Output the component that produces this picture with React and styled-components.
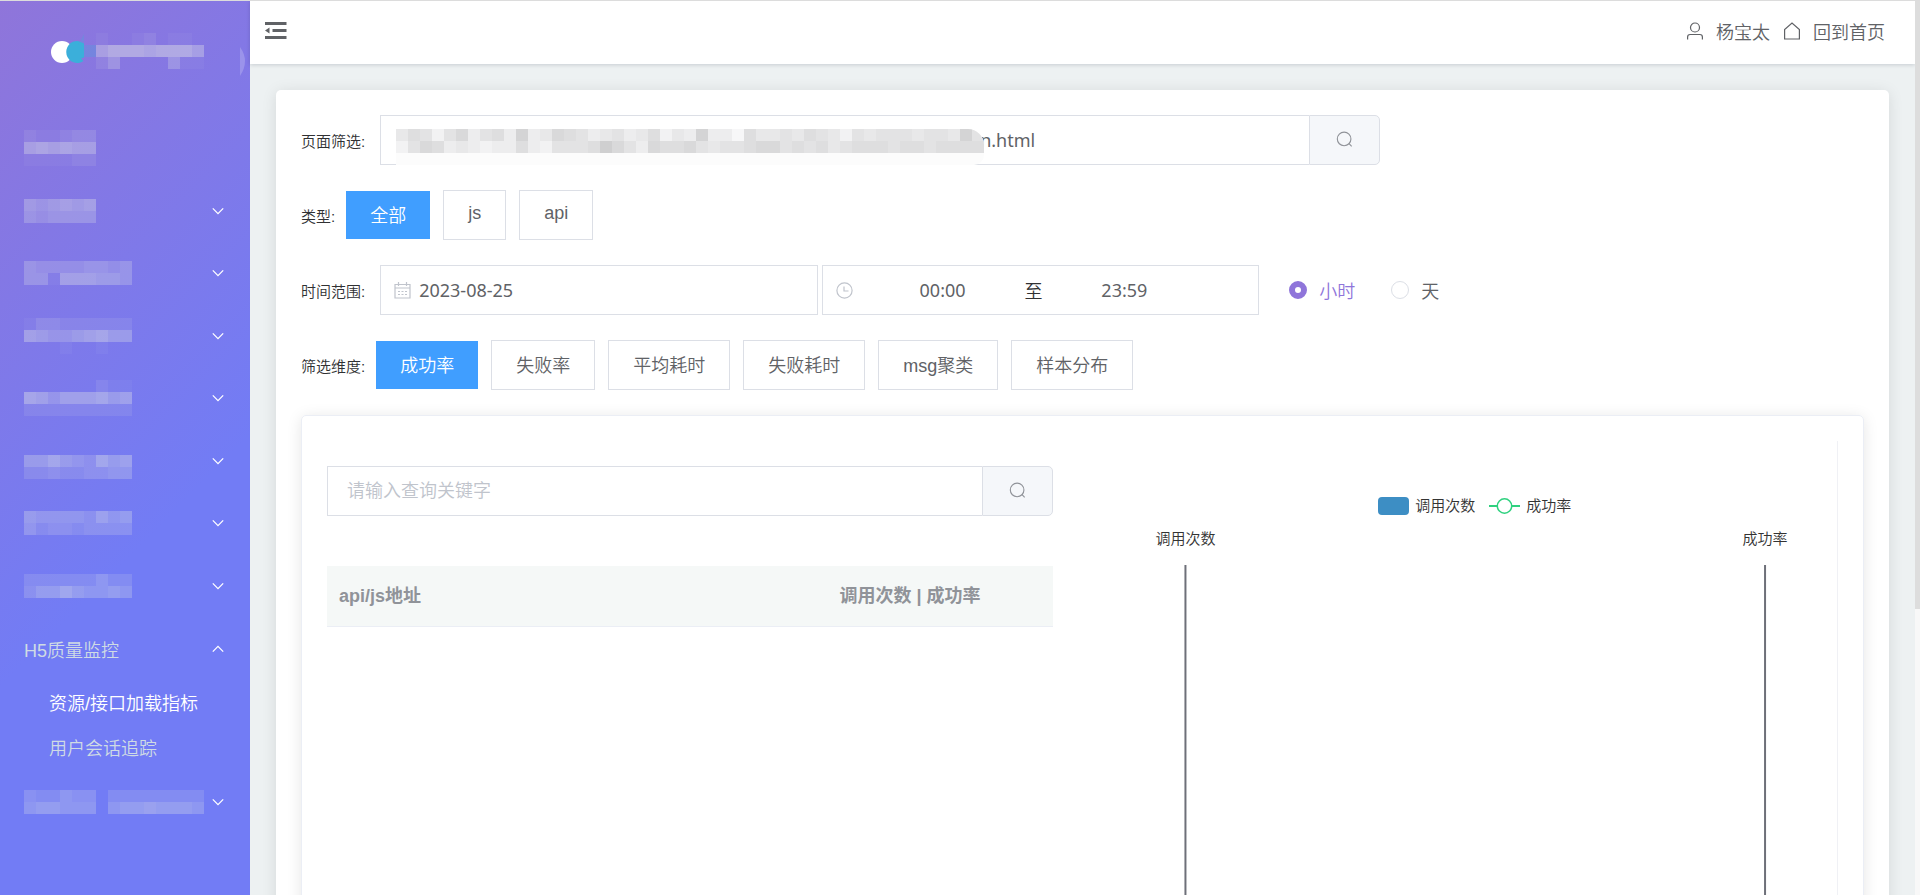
import React, { useState } from 'react';
import styled, { createGlobalStyle, css } from 'styled-components';

const MENU = [
  { rows: ['211233', '787877', '111122'], arrow: false },
  { rows: ['656767', '545555'], arrow: true },
  { rows: ['544445545', '551777665'], arrow: true },
  { rows: ['133222222', '765567866', '000100100'], arrow: true },
  { rows: ['000000211', '875777867', '222222222'], arrow: true },
  { rows: ['000000000', '668654867', '334334455'], arrow: true },
  { rows: ['655554756', '534434444'], arrow: true },
  { rows: ['333333533', '466865565'], arrow: true },
];

const LAST_ROWS = ['433544033333333', '566555056676665'];
const LOGO_ROWS = ['100120110', '799989997', '250000511'];
const URL_ROWS = [
  '4652573563834765345346243833164454654254555455485',
  '2576343233632555697537667545567756564566656656666',
];

const TYPES = ['全部', 'js', 'api'];
const DIMENSIONS = ['成功率', '失败率', '平均耗时', '失败耗时', 'msg聚类', '样本分布'];

// Blocks that hide private text
const Mosaic = ({ rows, light }) => (
  <svg width={rows[0].length * 12} height={rows.length * 12} shapeRendering="crispEdges" aria-hidden="true">
    {rows.map((row, y) =>
      row.split('').map((v, x) => (
        <rect
          key={`${x}-${y}`}
          x={x * 12}
          y={y * 12}
          width="12"
          height="12"
          fill={light ? '#e0e4e6' : `rgb(${252 - v * 5},${252 - v * 5},${253 - v * 5})`}
          fillOpacity={light ? v * 0.052 : 1}
        />
      ))
    )}
  </svg>
);

const Chevron = ({ up }) => (
  <svg width="12" height="8" viewBox="0 0 12 8" fill="none" stroke="#ffffff" strokeWidth="1.3" aria-hidden="true">
    <path d={up ? 'M0.8 6.6 6 1.4l5.2 5.2' : 'M0.8 1.4 6 6.6l5.2-5.2'} />
  </svg>
);

const SearchIcon = () => (
  <svg width="17" height="17" viewBox="0 0 18 18" fill="none" stroke="#909399" strokeWidth="1.2" aria-hidden="true">
    <circle cx="8.6" cy="8.4" r="7.2" />
    <path d="M13.6 13.2l3 3" />
  </svg>
);

const App = () => {
  const [type, setType] = useState('全部');
  const [dimension, setDimension] = useState('成功率');
  const [unit, setUnit] = useState('hour');

  return (
    <>
      <GlobalStyle />
      <Shell>
        <Sidebar>
          <LogoArea>
            <svg width="250" height="58" aria-hidden="true">
              <circle cx="62" cy="33" r="11" fill="#ffffff" />
              <path d="M84 24.500v14l-3 1 2.500 2.500A11 11 0 1 1 78 22z" fill="#3bafda" />
              <path d="M78 26l6-11v11h12v12H84V26z" fill="#3bafda" fillOpacity=".25" />
              <path d="M240 28q10 14 0 29z" fill="#ffffff" fillOpacity=".2" />
              <svg x="96" y="14">
                <Mosaic rows={LOGO_ROWS} light />
              </svg>
            </svg>
          </LogoArea>
          <Menu>
            {MENU.map((item, i) => (
              <MenuButton key={i} type="button" aria-label={`菜单 ${i + 1}`}>
                <Mosaic rows={item.rows} light />
                {item.arrow && <Chevron />}
              </MenuButton>
            ))}
          </Menu>
          <SubHeader type="button" aria-expanded="true">
            H5质量监控
            <Chevron up />
          </SubHeader>
          <SubLink href="#resource" $active>资源/接口加载指标</SubLink>
          <SubLink href="#session">用户会话追踪</SubLink>
          <SubHeader type="button" aria-label="菜单 10">
            <Mosaic rows={LAST_ROWS} light />
            <Chevron />
          </SubHeader>
        </Sidebar>

        <Main>
          <TopBar>
            <IconButton type="button" aria-label="折叠菜单">
              <svg width="22" height="18" viewBox="0 0 22 18" fill="#606266">
                <path d="M0 0h21.500v3H0zM7.500 7h14v3h-14zM0 14h21.500v3H0zM0 8.500l4.500-3v6z" />
              </svg>
            </IconButton>
            <UserNav>
              <NavLink href="#user">
                <svg width="18" height="18" viewBox="0 0 18 18" fill="none" stroke="#606266" strokeWidth="1.2">
                  <circle cx="9" cy="5.500" r="4.500" />
                  <path d="M1.600 17.500v-2.500q0-2.500 2.500-2.500h9.800q2.500 0 2.500 2.500v2.500" />
                </svg>
                杨宝太
              </NavLink>
              <NavLink href="#home">
                <svg width="18" height="18" viewBox="0 0 18 18" fill="none" stroke="#606266" strokeWidth="1.2">
                  <path d="M1.600 17V7.500L9 1l7.400 6.500V17z" />
                </svg>
                回到首页
              </NavLink>
            </UserNav>
          </TopBar>

          <Content>
            <Card>
              <FilterRow>
                <Label htmlFor="page">页面筛选:</Label>
                <SearchGroup $wide>
                  <TextInput id="page" defaultValue="n.html" $masked />
                  <UrlMask>
                    <Mosaic rows={URL_ROWS} />
                  </UrlMask>
                  <SearchButton type="button" aria-label="搜索页面">
                    <SearchIcon />
                  </SearchButton>
                </SearchGroup>
              </FilterRow>

              <FilterRow>
                <Label as="span">类型:</Label>
                <Options>
                  {TYPES.map((name) => (
                    <OptionButton key={name} type="button" $active={type === name} onClick={() => setType(name)}>
                      {name}
                    </OptionButton>
                  ))}
                </Options>
              </FilterRow>

              <FilterRow>
                <Label htmlFor="date">时间范围:</Label>
                <PickerGroup>
                  <Picker>
                    <svg width="17" height="17" viewBox="0 0 17 17" fill="none" stroke="#c0c4cc" strokeWidth="1.2">
                      <path d="M1 2.500h15v13.500H1zM1 6h15M4.500 0v4M12.500 0v4" />
                      <path d="M4 9.500h9M4 12.500h9" strokeDasharray="2 1.500" />
                    </svg>
                    <DateInput id="date" defaultValue="2023-08-25" />
                  </Picker>
                  <Picker $range>
                    <svg width="17" height="17" viewBox="0 0 17 17" fill="none" stroke="#c0c4cc" strokeWidth="1.2">
                      <circle cx="8.500" cy="8.500" r="7.600" />
                      <path d="M8 4.500V9h4.500" />
                    </svg>
                    <TimeInput aria-label="开始时间" defaultValue="00:00" />
                    <RangeText>至</RangeText>
                    <TimeInput aria-label="结束时间" defaultValue="23:59" />
                  </Picker>
                </PickerGroup>
                <RadioLabel $checked={unit === 'hour'}>
                  <Radio type="radio" name="unit" checked={unit === 'hour'} onChange={() => setUnit('hour')} />
                  小时
                </RadioLabel>
                <RadioLabel $checked={unit === 'day'}>
                  <Radio type="radio" name="unit" checked={unit === 'day'} onChange={() => setUnit('day')} />
                  天
                </RadioLabel>
              </FilterRow>

              <FilterRow>
                <Label as="span">筛选维度:</Label>
                <Options>
                  {DIMENSIONS.map((name) => (
                    <OptionButton key={name} type="button" $active={dimension === name} onClick={() => setDimension(name)}>
                      {name}
                    </OptionButton>
                  ))}
                </Options>
              </FilterRow>

              <InnerCard>
                <ListPanel>
                  <SearchGroup>
                    <TextInput aria-label="查询关键字" placeholder="请输入查询关键字" />
                    <SearchButton type="button" aria-label="查询">
                      <SearchIcon />
                    </SearchButton>
                  </SearchGroup>
                  <Table>
                    <thead>
                      <tr>
                        <Th>api/js地址</Th>
                        <Th $narrow>调用次数 | 成功率</Th>
                      </tr>
                    </thead>
                  </Table>
                </ListPanel>
                <ChartPanel>
                  <Legend>
                    <LegendItem>
                      <svg width="31" height="18">
                        <rect width="31" height="18" rx="4" fill="#3d8ec4" />
                      </svg>
                      调用次数
                    </LegendItem>
                    <LegendItem>
                      <svg width="31" height="18" fill="#ffffff" stroke="#2fd17f">
                        <path d="M0 9h31" strokeWidth="2" />
                        <circle cx="15.500" cy="9" r="7.200" strokeWidth="1.500" />
                      </svg>
                      成功率
                    </LegendItem>
                  </Legend>
                  <ChartSvg>
                    <text x="10%" y="14">调用次数</text>
                    <text x="90%" y="14">成功率</text>
                    <line x1="10%" x2="10%" y1="35" y2="100%" />
                    <line x1="90%" x2="90%" y1="35" y2="100%" />
                  </ChartSvg>
                </ChartPanel>
              </InnerCard>
            </Card>
          </Content>
        </Main>
        <ScrollTrack>
          <ScrollThumb />
        </ScrollTrack>
      </Shell>
    </>
  );
};

export default App;

// ============================================
// STYLES
// ============================================

const GlobalStyle = createGlobalStyle`
  * {
    box-sizing: border-box;
  }

  body {
    margin: 0;
    font-family: 'Liberation Sans', 'Noto Sans CJK SC', sans-serif;
    font-size: 18px;
    font-weight: 350;
    color: #606266;
  }

  button, input {
    font: inherit;
    color: inherit;
    margin: 0;
  }

  svg {
    flex-shrink: 0;
  }
`;

const Shell = styled.div`
  display: flex;
  height: 100vh;
  overflow: hidden;
  border-top: 1px solid #dcdcdc;
`;

const Sidebar = styled.nav`
  display: flex;
  flex-direction: column;
  flex: 0 0 250px;
  background: linear-gradient(135deg, #8f75da 0%, #727cf5 60%);
`;

const LogoArea = styled.div`
  height: 116px;
  padding-top: 18px;
`;

const Menu = styled.div`
  display: grid;
  grid-template-rows: repeat(8, 1fr);
  height: 500px;
`;

const MenuButton = styled.button`
  display: flex;
  align-items: center;
  justify-content: space-between;
  padding: 0 26px 0 24px;
  border: 0;
  background: none;
  color: #cfdbe4;
  cursor: pointer;
`;

const SubHeader = styled(MenuButton)`
  height: 63px;
`;

const SubLink = styled.a`
  height: 45px;
  padding-left: 49px;
  line-height: 48px;
  color: ${({ $active }) => ($active ? '#ffffff' : '#cfdbe4')};
  text-decoration: none;
`;

const Main = styled.div`
  display: flex;
  flex-direction: column;
  flex: 1;
  min-width: 0;
  background: #edf1f2;
`;

const TopBar = styled.header`
  display: flex;
  align-items: center;
  justify-content: space-between;
  flex: 0 0 63px;
  padding: 0 30px 4px 15px;
  background: #ffffff;
  box-shadow: 0 1px 4px rgba(0, 21, 41, 0.16);
`;

const IconButton = styled.button`
  display: flex;
  padding: 0;
  border: 0;
  background: none;
  cursor: pointer;
`;

const UserNav = styled.div`
  display: flex;
  gap: 13px;
`;

const NavLink = styled.a`
  display: flex;
  align-items: center;
  gap: 12px;
  color: #606266;
  text-decoration: none;
`;

const Content = styled.main`
  flex: 1;
  padding: 26px;
  overflow: hidden;
`;

const Card = styled.section`
  min-height: 1200px;
  padding: 25px;
  border-radius: 5px;
  background: #ffffff;
  box-shadow: 0 2px 15px rgba(0, 0, 0, 0.1);
`;

const FilterRow = styled.div`
  display: flex;
  align-items: center;
  height: 50px;
  margin-bottom: 25px;
`;

const Label = styled.label`
  flex-shrink: 0;
  margin-right: 11px;
  font-size: 15px;
  color: #303133;
`;

const SearchGroup = styled.div`
  position: relative;
  display: flex;
  height: 50px;
  ${({ $wide }) => $wide && css`
    width: 1000px;
    margin-left: 4px;
  `}
`;

const TextInput = styled.input`
  flex: 1;
  min-width: 0;
  padding: 0 19px;
  border: 1px solid #dcdfe6;
  border-right: 0;
  background: #ffffff;
  outline: 0;
  ${({ $masked }) => $masked && css`
    padding-left: 599px;
    font-family: 'Noto Sans', sans-serif;
    font-weight: 400;
  `}

  &::placeholder {
    color: #c0c4cc;
    opacity: 1;
  }
`;

const UrlMask = styled.div`
  position: absolute;
  top: 14px;
  left: 16px;
  height: 36px;
  border-radius: 0 16px 10px 0;
  background: #fcfcfc;
  overflow: hidden;
`;

const SearchButton = styled.button`
  display: flex;
  align-items: center;
  justify-content: center;
  width: 71px;
  padding: 0 0 2px;
  border: 1px solid #dcdfe6;
  border-radius: 0 5px 5px 0;
  background: #f5f7fa;
  cursor: pointer;
`;

const Options = styled.div`
  display: flex;
  align-items: center;
  gap: 13px;
`;

const OptionButton = styled.button`
  height: 50px;
  padding: 0 24px 3px;
  border: 1px solid #dcdfe6;
  background: #ffffff;
  cursor: pointer;
  ${({ $active }) => $active && css`
    height: 48px;
    border: 0;
    background: #409eff;
    color: #ffffff;
  `}
`;

const PickerGroup = styled.div`
  display: flex;
  gap: 4px;
  width: 879px;
  margin: 0 30px 0 4px;
`;

const Picker = styled.div`
  display: flex;
  align-items: center;
  flex: 1;
  min-width: 0;
  height: 50px;
  padding: 0 13px;
  border: 1px solid #dcdfe6;
  background: #ffffff;
  ${({ $range }) => $range && css`
    svg {
      margin-right: 8px;
    }
  `}
`;

const DateInput = styled.input`
  flex: 1;
  min-width: 0;
  padding: 0 8px;
  border: 0;
  background: none;
  outline: 0;
  font-family: 'Noto Sans', sans-serif;
  font-weight: 400;
`;

const TimeInput = styled(DateInput)`
  flex: 0 0 40%;
  text-align: center;
`;

const RangeText = styled.span`
  color: #303133;
`;

const RadioLabel = styled.label`
  display: flex;
  align-items: center;
  gap: 12px;
  margin-right: 36px;
  color: ${({ $checked }) => ($checked ? '#8f75da' : '#606266')};
`;

const Radio = styled.input`
  appearance: none;
  width: 18px;
  height: 18px;
  border: 1px solid #dcdfe6;
  border-radius: 50%;
  background: #ffffff;

  &:checked {
    border: 6px solid #8f75da;
  }
`;

const InnerCard = styled.section`
  display: grid;
  grid-template-columns: 1fr 1fr;
  gap: 60px;
  min-height: 800px;
  padding: 25px;
  border: 1px solid #ebeef5;
  border-radius: 5px;
  box-shadow: 0 2px 15px rgba(0, 0, 0, 0.1);
`;

const ListPanel = styled.div`
  padding-top: 25px;
`;

const Table = styled.table`
  width: 100%;
  margin-top: 50px;
  border-collapse: collapse;
`;

const Th = styled.th`
  width: ${({ $narrow }) => ($narrow ? '225px' : 'auto')};
  height: 60px;
  padding: 0 12px 3px;
  border-bottom: 1px solid #ebeef5;
  background: #f5f8f7;
  color: #909399;
  font-weight: 700;
  text-align: left;
`;

const ChartPanel = styled.div`
  display: flex;
  flex-direction: column;
  padding-top: 53px;
  border-right: 1px solid #f0f1f5;
`;

const Legend = styled.div`
  display: flex;
  justify-content: center;
  gap: 14px;
  height: 20px;
  font-size: 15px;
  color: #333333;
`;

const LegendItem = styled.span`
  display: flex;
  align-items: center;
  gap: 6px;

  svg {
    margin-top: 4px;
  }
`;

const ChartSvg = styled.svg`
  flex: 1;
  width: 100%;
  margin-top: 16px;

  text {
    font-size: 15px;
    fill: #333333;
    text-anchor: middle;
  }

  line {
    stroke: #6e7079;
    stroke-width: 2;
  }
`;

const ScrollTrack = styled.div`
  flex: 0 0 5px;
  background: #f8f8f8;
`;

const ScrollThumb = styled.div`
  height: 68%;
  background: #dddddd;
`;
